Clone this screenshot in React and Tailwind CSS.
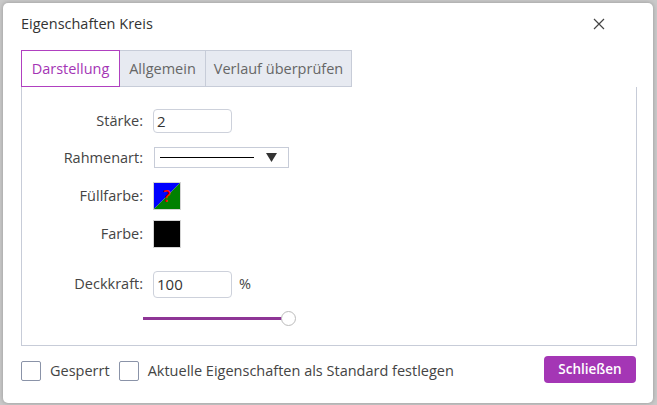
import React from "react";

const Field = ({ label, children }) => (
  <div className="flex items-center">
    <span className="w-[131px] text-right pr-[10px] text-[14.5px] text-[#444]">{label}</span>
    {children}
  </div>
);

const Checkbox = ({ label }) => (
  <label className="flex items-center gap-[9px]">
    <span className="w-[20px] h-[20px] border border-[#8a93a8] rounded-[2px] bg-white" />
    <span className="text-[14.5px] text-[#444]">{label}</span>
  </label>
);

export default function App() {
  return (
    <div
      className="w-[657px] h-[405px] bg-[#c9c9c9] pt-[3px] pl-[3px]"
      style={{ fontFamily: '"Open Sans", "Noto Sans", sans-serif' }}
    >
      <div className="w-[650px] h-[400px] bg-white rounded-[5px] shadow-[0_0_4px_rgba(0,0,0,0.25)] flex flex-col pl-[18px] pr-[17px]">
        {/* Header */}
        <div className="flex items-center justify-between h-[40px] pt-[2px]">
          <span className="text-[14.5px] text-[#333]">Eigenschaften Kreis</span>
          <svg width="12" height="12" viewBox="0 0 12 12" className="mr-[31px]">
            <path d="M1 1L11 11M11 1L1 11" stroke="#444" strokeWidth="1.2" />
          </svg>
        </div>

        {/* Tabs */}
        <div className="flex mt-[7px] h-[37px]">
          <div className="w-[99px] border border-[#b040c0] text-[#a435b5] text-[14.5px] flex items-center justify-center bg-white">
            Darstellung
          </div>
          <div className="w-[86px] border-y border-r border-[#c7ccd8] bg-[#e7eaf1] text-[#666] text-[14.5px] flex items-center justify-center">
            Allgemein
          </div>
          <div className="w-[146px] border-y border-r border-[#c7ccd8] bg-[#e7eaf1] text-[#666] text-[14.5px] flex items-center justify-center">
            Verlauf überprüfen
          </div>
        </div>

        {/* Panel */}
        <div className="w-[616px] h-[259px] border border-[#c7ccd8] border-t-0 flex flex-col pt-[22px]">
          <Field label="Stärke:">
            <div className="w-[79px] h-[24px] border border-[#cdd1db] rounded-[4px] px-[3px] text-[15px] text-[#333] flex items-center">
              2
            </div>
          </Field>
          <div className="mt-[14px]">
            <Field label="Rahmenart:">
              <div className="ml-[1px] w-[135px] h-[21px] border border-[#c7ccd8] flex items-center pl-[5px] pr-[11px] gap-[12px]">
                <span className="flex-1 h-[1px] bg-black" />
                <svg width="11" height="9" viewBox="0 0 11 9">
                  <path d="M0 0H11L5.5 9Z" fill="#333" />
                </svg>
              </div>
            </Field>
          </div>
          <div className="mt-[13px]">
            <Field label="Füllfarbe:">
              <div className="w-[28px] h-[28px] border border-[#d4d4d4]">
                <svg width="26" height="26" viewBox="0 0 26 26" className="block">
                  <path d="M0 0H26L0 26Z" fill="#0000ff" />
                  <path d="M26 0V26H0Z" fill="#008000" />
                  <text x="13" y="19" textAnchor="middle" fontSize="16" fontWeight="600" fill="#ff0000" fontFamily="Open Sans, sans-serif">?</text>
                </svg>
              </div>
            </Field>
          </div>
          <div className="mt-[10px]">
            <Field label="Farbe:">
              <div className="w-[28px] h-[28px] border border-[#d4d4d4] bg-black" />
            </Field>
          </div>
          <div className="mt-[23px]">
            <Field label="Deckkraft:">
              <div className="w-[79px] h-[27px] border border-[#cdd1db] rounded-[4px] px-[3px] text-[15px] text-[#333] flex items-center">
                100
              </div>
              <span className="ml-[7px] text-[14.5px] text-[#444]">%</span>
            </Field>
          </div>
          <div className="mt-[13px] ml-[121px] flex items-center">
            <span className="w-[140px] h-[3px] bg-[#8e3596]" />
            <span className="w-[15px] h-[15px] rounded-full border border-[#bbb] bg-white -ml-[2px]" />
          </div>
        </div>

        {/* Footer */}
        <div className="flex items-center mt-[13px]">
          <Checkbox label="Gesperrt" />
          <div className="ml-[9px]">
            <Checkbox label="Aktuelle Eigenschaften als Standard festlegen" />
          </div>
          <button className="ml-auto w-[92px] h-[27px] rounded-[4px] bg-[#a436b5] text-white text-[13.5px] font-semibold -mt-[3px]">
            Schließen
          </button>
        </div>
      </div>
    </div>
  );
}
